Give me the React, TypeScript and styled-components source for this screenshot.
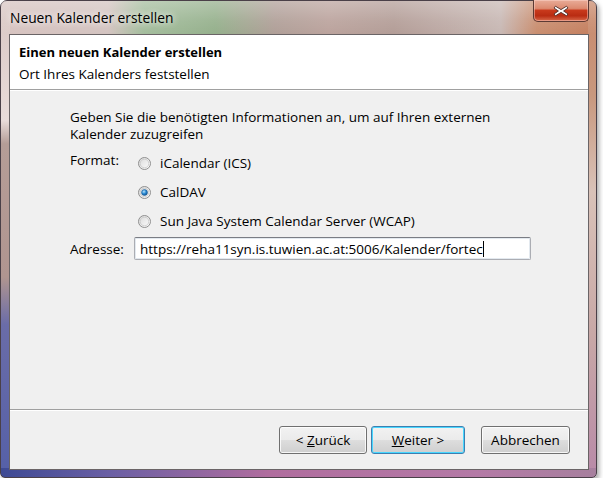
import { FC } from "react";
import styled, { createGlobalStyle } from "styled-components";

const GlobalStyle = createGlobalStyle`
  body {
    margin: 0;
    background: #ffffff;
    font-family: "Open Sans", "Noto Sans", sans-serif;
    font-size: 13.5px;
    color: #000;
  }
`;

const Window = styled.div`
  width: 597px;
  height: 478px;
  box-sizing: border-box;
  border: 1px solid #4a4048;
  border-radius: 7px 7px 5px 5px;
  display: flex;
  flex-direction: column;
  box-shadow: 2px 3px 5px rgba(0, 0, 0, 0.35);
  background:
    linear-gradient(90deg, #3e4a94 0%, #6a5fa4 18%, #b06d9e 45%, #b47aa6 80%, #a7809e 100%) bottom / 100% 9px no-repeat,
    linear-gradient(180deg, #d8c6c3 0%, #e9dcda 25%, #b59d97 30%, #b09590 58%, #6a6ca8 68%, #5560a8 100%) left / 9px 100% no-repeat,
    linear-gradient(180deg, #c9896b 0%, #c8987e 20%, #d9c2b8 40%, #c8a8a6 70%, #b88aa8 100%) right / 8px 100% no-repeat,
    linear-gradient(90deg, #d7c3c0 0%, #d3c3c0 18%, #a4bd9d 24%, #95b08c 36%, #b09f98 46%, #bba39d 55%, #b39d97 66%, #c8b8b4 84%, #c98e70 90%, #c47e5e 100%);
`;

const TitleBar = styled.div`
  height: 33px;
  display: flex;
  justify-content: space-between;
  align-items: flex-start;
  padding: 0 7px 0 9px;
  background: linear-gradient(180deg, rgba(255, 255, 255, 0.28) 0%, rgba(255, 255, 255, 0.08) 60%, rgba(255, 255, 255, 0) 100%);
`;

const Title = styled.span`
  margin-top: 7px;
  font-size: 13.8px;
  color: #000;
  text-shadow: 0 0 6px rgba(255, 255, 255, 0.9), 0 0 10px rgba(255, 255, 255, 0.6);
`;

const CloseButton = styled.div`
  width: 56px;
  height: 22px;
  margin-top: -1px;
  box-sizing: border-box;
  border: 1px solid #5c3a34;
  border-top: none;
  border-radius: 0 0 5px 5px;
  background: linear-gradient(180deg, #e9ac98 0%, #dc8a70 40%, #c8391c 50%, #b92c12 75%, #d8694a 100%);
  box-shadow: inset 0 0 0 1px rgba(255, 220, 210, 0.45);
  display: flex;
  align-items: center;
  justify-content: center;
`;

const Client = styled.div`
  flex: 1;
  margin: 0 7px 7px 8px;
  border: 1px solid #6a6466;
  background: #f0f0f0;
  display: flex;
  flex-direction: column;
`;

const Header = styled.div`
  height: 55px;
  box-sizing: border-box;
  background: #ffffff;
  border-bottom: 1px solid #a0a0a0;
  padding: 8px 0 0 9px;
  display: flex;
  flex-direction: column;
  gap: 4px;
`;

const HeaderTitle = styled.div`
  font-weight: 700;
  font-size: 13px;
  line-height: 18px;
`;

const HeaderSub = styled.div`
  line-height: 18px;
`;

const Body = styled.div`
  flex: 1;
  border-top: 1px solid #ffffff;
  padding: 18px 0 0 60px;
  display: flex;
  flex-direction: column;
`;

const Intro = styled.p`
  margin: 0 0 8px 0;
  line-height: 17px;
  width: 470px;
`;

const FormRow = styled.div`
  display: flex;
  align-items: flex-start;
`;

const Label = styled.div`
  width: 64px;
  line-height: 18px;
`;

const RadioList = styled.div`
  display: flex;
  flex-direction: column;
  gap: 11px;
  padding-left: 4px;
  padding-top: 3px;
`;

const RadioRow = styled.label`
  display: flex;
  align-items: center;
  gap: 9px;
  height: 18px;
  line-height: 18px;
`;

const Input = styled.div`
  width: 397px;
  height: 23px;
  box-sizing: border-box;
  border: 1px solid #abadb3;
  border-top-color: #7a7d84;
  border-radius: 2px;
  background: #ffffff;
  padding: 0 0 0 5px;
  display: flex;
  align-items: center;
  white-space: nowrap;
  box-shadow: inset 0 0 0 1px #e3e9ef;
`;

const Caret = styled.span`
  display: inline-block;
  width: 1px;
  height: 16px;
  background: #000;
`;

const AddressRow = styled(FormRow)`
  margin-top: 7px;
  align-items: center;
`;

const Footer = styled.div`
  height: 59px;
  border-top: 1px solid #a0a0a0;
  box-shadow: inset 0 1px 0 #ffffff;
  display: flex;
  justify-content: flex-end;
  align-items: center;
  padding-right: 18px;
`;

const Button = styled.button<{ $w: number; $default?: boolean; $gap?: number }>`
  width: ${(p) => p.$w}px;
  height: 28px;
  margin-left: ${(p) => p.$gap ?? 0}px;
  font-family: inherit;
  font-size: 13.5px;
  color: #000;
  border: 1px solid ${(p) => (p.$default ? "#3c7fb1" : "#707070")};
  border-radius: 3px;
  background: linear-gradient(180deg, #f2f2f2 0%, #ebebeb 48%, #dddddd 52%, #cfcfcf 100%);
  box-shadow: inset 0 0 0 1px ${(p) => (p.$default ? "#48d7ff" : "rgba(255,255,255,0.8)")};
  padding: 0;
  u {
    text-decoration: underline;
  }
`;

const RadioIcon: FC<{ checked?: boolean }> = ({ checked }) => (
  <svg width="13" height="13" viewBox="0 0 13 13">
    <defs>
      <linearGradient id="rbg" x1="0" y1="0" x2="1" y2="1">
        <stop offset="0" stopColor="#d8d8d8" />
        <stop offset="1" stopColor="#ffffff" />
      </linearGradient>
      <radialGradient id="dot" cx="0.4" cy="0.35" r="0.7">
        <stop offset="0" stopColor="#b8e4fb" />
        <stop offset="0.5" stopColor="#2a8ad4" />
        <stop offset="1" stopColor="#0c4c8a" />
      </radialGradient>
    </defs>
    <circle cx="6.5" cy="6.5" r="6" fill="url(#rbg)" stroke="#8f8f8f" strokeWidth="1" />
    <circle cx="6.5" cy="6.5" r="4.3" fill="none" stroke="#c8c8c8" strokeWidth="0.8" />
    {checked && <circle cx="6.5" cy="6.5" r="3" fill="url(#dot)" stroke="#1d5a92" strokeWidth="0.5" />}
  </svg>
);

const CloseGlyph = () => (
  <svg width="16" height="12" viewBox="0 0 16 12">
    <path
      d="M2.5 1.2 L8 4.6 L13.5 1.2 L15 3 L10.6 6 L15 9 L13.5 10.8 L8 7.4 L2.5 10.8 L1 9 L5.4 6 L1 3 Z"
      fill="#ffffff"
      stroke="#4a2a26"
      strokeWidth="0.9"
      strokeLinejoin="round"
    />
  </svg>
);

const App: FC = () => {
  return (
    <>
      <GlobalStyle />
      <Window>
        <TitleBar>
          <Title>Neuen Kalender erstellen</Title>
          <CloseButton>
            <CloseGlyph />
          </CloseButton>
        </TitleBar>
        <Client>
          <Header>
            <HeaderTitle>Einen neuen Kalender erstellen</HeaderTitle>
            <HeaderSub>Ort Ihres Kalenders feststellen</HeaderSub>
          </Header>
          <Body>
            <Intro>
              Geben Sie die benötigten Informationen an, um auf Ihren externen Kalender zuzugreifen
            </Intro>
            <FormRow>
              <Label>Format:</Label>
              <RadioList>
                <RadioRow>
                  <RadioIcon />
                  iCalendar (ICS)
                </RadioRow>
                <RadioRow>
                  <RadioIcon checked />
                  CalDAV
                </RadioRow>
                <RadioRow>
                  <RadioIcon />
                  Sun Java System Calendar Server (WCAP)
                </RadioRow>
              </RadioList>
            </FormRow>
            <AddressRow>
              <Label>Adresse:</Label>
              <Input>
                https://reha11syn.is.tuwien.ac.at:5006/Kalender/fortec
                <Caret />
              </Input>
            </AddressRow>
          </Body>
          <Footer>
            <Button $w={88}>
              &lt; <u>Z</u>urück
            </Button>
            <Button $w={94} $gap={4} $default>
              <u>W</u>eiter &gt;
            </Button>
            <Button $w={89} $gap={16}>
              Abbrechen
            </Button>
          </Footer>
        </Client>
      </Window>
    </>
  );
};

export default App;
